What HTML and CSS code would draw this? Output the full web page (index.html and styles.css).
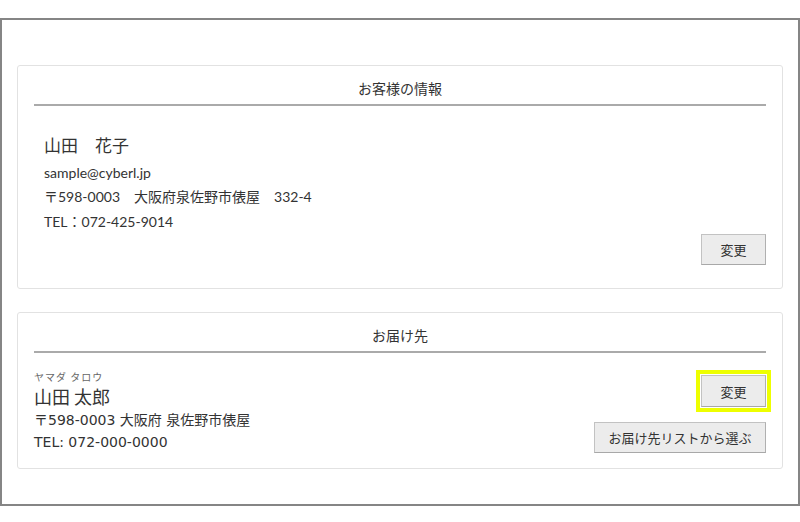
FILE: index.html
```html
<!DOCTYPE html>
<html lang="ja">
<head>
    <meta charset="UTF-8">
    <meta name="viewport" content="width=device-width, initial-scale=1.0">
    <title>お客様の情報</title>
    <link rel="stylesheet" href="styles.css">
</head>
<body>
    <div class="frame">
        <!-- お客様の情報 -->
        <section class="card customer">
            <h2 class="card-title">お客様の情報</h2>
            <div class="customer-info">
                <p class="customer-name">山田　花子</p>
                <p>sample@cyberl.jp</p>
                <p>〒598-0003　大阪府泉佐野市俵屋　332-4</p>
                <p>TEL：072-425-9014</p>
            </div>
            <div class="actions">
                <button class="btn btn-small">変更</button>
            </div>
        </section>

        <!-- お届け先 -->
        <section class="card delivery">
            <h2 class="card-title">お届け先</h2>
            <div class="delivery-body">
                <div class="delivery-info">
                    <p class="kana">ヤマダ タロウ</p>
                    <p class="delivery-name">山田 太郎</p>
                    <p>〒598-0003 大阪府 泉佐野市俵屋</p>
                    <p>TEL: 072-000-0000</p>
                </div>
                <div class="delivery-actions">
                    <button class="btn btn-small highlight">変更</button>
                    <button class="btn btn-wide">お届け先リストから選ぶ</button>
                </div>
            </div>
        </section>
    </div>
</body>
</html>
```

FILE: styles.css
```css
/* 全体 */
body {
    margin: 0;
    font-family: "Lato", "Noto Sans CJK JP", sans-serif;
    color: #333;
    background: #fff;
}

p {
    margin: 0;
}

.frame {
    box-sizing: border-box;
    margin-top: 18px;
    height: 488px;
    border: 2px solid #858585;
    padding: 45px 15px 0 15px;
}

/* カード */
.card {
    border: 1px solid #e2e2e2;
    border-radius: 3px;
    padding: 0 16px;
}

.card + .card {
    margin-top: 23px;
}

.card-title {
    margin: 0;
    padding: 12px 0 6px;
    font-size: 14px;
    font-weight: normal;
    line-height: 20px;
    text-align: center;
    border-bottom: 2px solid #aaa;
    font-family: "Noto Sans CJK JP", sans-serif;
}

/* お客様の情報 */
.customer {
    padding-bottom: 23px;
}

.customer-info {
    padding: 28px 10px 0;
    font-size: 14px;
    line-height: 24.5px;
}

.customer-info .customer-name {
    font-size: 17px;
    margin-bottom: 2px;
}

.tel {
    letter-spacing: -0.2px;
}

.actions {
    display: flex;
    justify-content: flex-end;
}

/* お届け先 */
.delivery-body {
    display: flex;
    justify-content: space-between;
    padding-bottom: 15px;
}

.delivery-info {
    padding-top: 17px;
    font-family: "DejaVu Sans", "Noto Sans CJK JP", sans-serif;
    font-size: 14px;
    line-height: 22px;
}

.kana {
    font-family: "Noto Sans CJK JP", sans-serif;
    font-size: 10px;
    line-height: 14px;
    color: #666;
    letter-spacing: 1px;
}

.delivery-info .delivery-name {
    font-family: "Noto Sans CJK JP", sans-serif;
    font-size: 18px;
    line-height: 24px;
    margin-bottom: 1px;
}

.delivery-actions {
    display: flex;
    flex-direction: column;
    align-items: flex-end;
    gap: 15px;
    padding-top: 22px;
}

/* ボタン */
.btn {
    font-family: "Noto Sans CJK JP", sans-serif;
    font-size: 13px;
    color: #333;
    background: #ececec;
    border: 1px solid #c2c2c2;
    border-right-color: #b0b0b0;
    border-bottom-color: #a8a8a8;
    padding: 0;
    cursor: pointer;
}

.btn-small {
    width: 65px;
    height: 31px;
}

.btn-wide {
    width: 172px;
    height: 31px;
}

.highlight {
    height: 32px;
    outline: 4px solid #eeff00;
    outline-offset: 1px;
}
```
